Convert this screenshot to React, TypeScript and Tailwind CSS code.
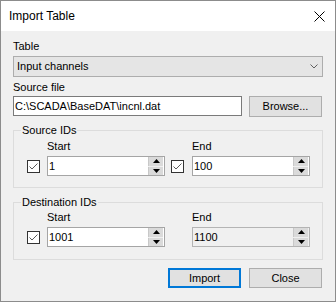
import React from "react";

const Check = ({ checked = true }: { checked?: boolean }) => (
  <div className="w-[13px] h-[13px] border border-[#333333] bg-white flex items-center justify-center shrink-0">
    {checked && (
      <svg width="11" height="11" viewBox="0 0 11 11">
        <path d="M1.5 5.5 L4 8 L9.5 2.5" fill="none" stroke="#5a5a5a" strokeWidth="1" />
      </svg>
    )}
  </div>
);

const Spin = ({ value, disabled = false }: { value: string; disabled?: boolean }) => (
  <div
    className={
      "w-[118px] h-[20px] border flex items-stretch " +
      (disabled ? "bg-[#f0f0f0] border-[#b4b4b4]" : "bg-white border-[#a5a5a5]")
    }
  >
    <div className="flex-1 flex items-center pl-[1px] leading-[13px] text-black">{value}</div>
    <div className="w-[15px] flex flex-col mr-[1px] gap-[1px] bg-[#f0f0f0]">
      <div className="flex-1 bg-[#dadada] border-l border-[#c8c8c8] flex items-center justify-center">
        <svg width="7" height="4" viewBox="0 0 7 4">
          <polygon points="3.5,0 7,4 0,4" fill="#000" />
        </svg>
      </div>
      <div className="flex-1 bg-[#dadada] border-l border-[#c8c8c8] flex items-center justify-center">
        <svg width="7" height="4" viewBox="0 0 7 4">
          <polygon points="0,0 7,0 3.5,4" fill="#000" />
        </svg>
      </div>
    </div>
  </div>
);

const Group = ({
  title,
  pt,
  pb,
  children,
}: {
  title: string;
  pt: string;
  pb: string;
  children: React.ReactNode;
}) => (
  <div className={"relative border border-[#dcdcdc] " + pt + " " + pb}>
    <div className="absolute top-[-7px] left-[7px] px-[1px] bg-[#f0f0f0] leading-[13px]">{title}</div>
    {children}
  </div>
);

export default function App() {
  return (
    <div className="w-[336px] h-[302px] border border-[#8c8c8c] bg-[#f0f0f0] flex flex-col font-['Liberation_Sans',Arial,sans-serif] text-[11px] text-black overflow-hidden">
      <div className="h-[30px] bg-white flex items-center justify-between pl-[8px] pr-[10px] shrink-0">
        <span className="text-[12px] leading-[14px]">Import Table</span>
        <svg width="11" height="11" viewBox="0 0 11 11" className="mb-[0px]">
          <path d="M0.5 0.5 L10.5 10.5 M10.5 0.5 L0.5 10.5" stroke="#000" strokeWidth="1" />
        </svg>
      </div>
      <div className="flex-1 flex flex-col px-[12px] pt-[9px]">
        <div className="leading-[13px]">Table</div>
        <div className="mt-[3px] h-[21px] bg-[#e5e5e5] border border-[#adadad] flex items-center justify-between pl-[3px] pr-[4px]">
          <span className="leading-[13px]">Input channels</span>
          <svg width="8" height="5" viewBox="0 0 8 5">
            <path d="M0.5 0.5 L4 4 L7.5 0.5" fill="none" stroke="#606060" strokeWidth="1" />
          </svg>
        </div>
        <div className="mt-[4px] leading-[13px]">Source file</div>
        <div className="mt-[2px] flex items-start justify-between">
          <div className="w-[229px] h-[20px] bg-white border border-[#7a7a7a] flex items-center pl-[1px] leading-[13px]">
            C:\SCADA\BaseDAT\incnl.dat
          </div>
          <button className="w-[73px] h-[21px] mr-[1px] bg-[#e1e1e1] border border-[#adadad] flex items-center justify-center leading-[13px]">
            Browse...
          </button>
        </div>

        <div className="mt-[13px]">
          <Group title="Source IDs" pt="pt-[9px]" pb="pb-[11px]">
            <div className="flex pl-[13px]">
              <div>
                <div className="pl-[20px] leading-[13px]">Start</div>
                <div className="mt-[3px] flex items-center gap-[7px]">
                  <Check />
                  <Spin value="1" />
                </div>
              </div>
              <div className="ml-[6px]">
                <div className="pl-[21px] leading-[13px]">End</div>
                <div className="mt-[3px] flex items-center gap-[8px]">
                  <Check />
                  <Spin value="100" />
                </div>
              </div>
            </div>
          </Group>
        </div>

        <div className="mt-[14px]">
          <Group title="Destination IDs" pt="pt-[8px]" pb="pb-[12px]">
            <div className="flex pl-[13px]">
              <div>
                <div className="pl-[20px] leading-[13px]">Start</div>
                <div className="mt-[3px] flex items-center gap-[7px]">
                  <Check />
                  <Spin value="1001" />
                </div>
              </div>
              <div className="ml-[6px]">
                <div className="pl-[21px] leading-[13px]">End</div>
                <div className="mt-[3px] flex items-center gap-[8px]">
                  <div className="w-[13px] h-[13px] shrink-0" />
                  <Spin value="1100" disabled />
                </div>
              </div>
            </div>
          </Group>
        </div>

        <div className="mt-[8px] flex justify-end gap-[8px] pr-[1px]">
          <button className="w-[73px] h-[20px] bg-[#e1e1e1] border-2 border-[#0078d7] flex items-center justify-center leading-[13px]">
            Import
          </button>
          <button className="w-[73px] h-[20px] bg-[#e1e1e1] border border-[#adadad] flex items-center justify-center leading-[13px]">
            Close
          </button>
        </div>
      </div>
    </div>
  );
}
